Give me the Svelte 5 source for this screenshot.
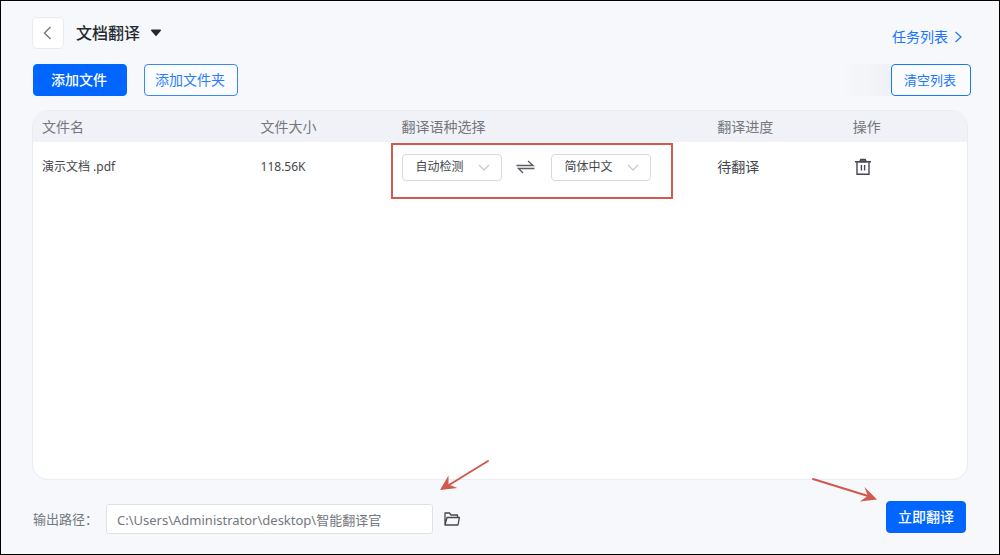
<script>
  let source = $state('auto');
  let target = $state('zh');
  let path = $state('C:\\Users\\Administrator\\desktop\\智能翻译官');
</script>

<main class="app">
  <header class="top">
    <button class="back" aria-label="返回">
      <svg width="16" height="16" viewBox="0 0 16 16"><path d="M10.500 2 4.500 8l6 6" fill="none" stroke="#73777e" stroke-width="1.4" /></svg>
    </button>
    <button class="title">
      文档翻译
      <svg width="12" height="8" viewBox="0 0 12 8"><path d="M1.700 1.200h8.600l-4.300 5z" fill="#24282f" stroke="#24282f" stroke-width="1.4" stroke-linejoin="round" /></svg>
    </button>
    <a class="tasks" href="#tasks">
      任务列表
      <svg width="8" height="12" viewBox="0 0 8 12"><path d="M.5 1l5.500 5-5.500 5" fill="none" stroke="#1a75ff" stroke-width="1.2" /></svg>
    </a>
  </header>

  <div class="toolbar">
    <button class="btn primary">添加文件</button>
    <button class="btn outline">添加文件夹</button>
    <span class="fade"></span>
    <button class="btn outline clear">清空列表</button>
  </div>

  <section class="card">
    <table>
      <colgroup>
        <col class="c-name" /><col class="c-size" /><col class="c-lang" /><col class="c-state" /><col class="c-op" />
      </colgroup>
      <thead>
        <tr><th>文件名</th><th>文件大小</th><th>翻译语种选择</th><th>翻译进度</th><th>操作</th></tr>
      </thead>
      <tbody>
        <tr>
          <td class="small">演示文档 .pdf</td>
          <td class="small">118.56K</td>
          <td class="lang">
            <div class="pair">
              <span class="pick">
                <select bind:value={source} aria-label="源语言"><option value="auto">自动检测</option></select>
                <svg width="12" height="8" viewBox="0 0 12 8"><path d="M1 1l5 5 5-5" fill="none" stroke="#c3c6d0" stroke-width="1.1" /></svg>
              </span>
              <svg class="swap" width="21" height="16" viewBox="0 0 21 16"><path d="M.5 6.500H17L12 2M18.500 9.500H2.500L7 14" fill="none" stroke="#5a5d63" stroke-width="1.4" /></svg>
              <span class="pick">
                <select bind:value={target} aria-label="目标语言"><option value="zh">简体中文</option></select>
                <svg width="12" height="8" viewBox="0 0 12 8"><path d="M1 1l5 5 5-5" fill="none" stroke="#c3c6d0" stroke-width="1.1" /></svg>
              </span>
            </div>
            <span class="mark"></span>
          </td>
          <td>待翻译</td>
          <td>
            <button class="icon" aria-label="删除">
              <svg width="18" height="18" viewBox="0 0 18 18" fill="none" stroke="#44474f" stroke-width="1.4"><path d="M1 3.700h16M3 4v12.300h12V4M7.400 7v5.500M10.600 7v5.500" /><path d="M5.800 3.700l1-2.200h4.400l1 2.200z" fill="#6b6e75" /></svg>
            </button>
          </td>
        </tr>
      </tbody>
    </table>
  </section>

  <footer class="bottom">
    <label for="out">输出路径：</label>
    <input id="out" type="text" bind:value={path} />
    <button class="icon folder" aria-label="打开文件夹">
      <svg width="16" height="14" viewBox="0 0 16 14" fill="none" stroke="#44474d" stroke-width="1.3" stroke-linejoin="round"><path d="M1 13V1h4.500l1.500 2h6.500v2.500M1 13l2-7.500h12.400L14 13z" /></svg>
    </button>
    <button class="btn primary go">立即翻译</button>
    <svg class="arrow to-path" width="52" height="34" viewBox="0 0 52 34"><path d="M48 2 9 26" stroke="#cf5a4d" stroke-width="2" stroke-linecap="round" /><path d="M0 31 8.500 16.500l0 9 9 3.500z" fill="#cf5a4d" /></svg>
    <svg class="arrow to-go" width="68" height="26" viewBox="0 0 68 26"><path d="M3 3 58 20" stroke="#cf5a4d" stroke-width="2" stroke-linecap="round" /><path d="M67 23.500 54.500 11l3.300 9-8 5.500z" fill="#cf5a4d" /></svg>
  </footer>
</main>

<style>
  :global(body) { margin: 0; }
  .app, .app * { box-sizing: border-box; }
  .app {
    display: flex;
    flex-direction: column;
    min-height: 100vh;
    padding: 16px 31px 20px;
    border: 1px solid #000;
    background: #f6f8fb;
    color: #44474d;
    font: 14px/20px "Noto Sans", "Noto Sans CJK SC", sans-serif;
  }
  button, input, select { margin: 0; font: inherit; color: inherit; }
  button { cursor: pointer; }
  svg { display: block; flex: none; }
  .top { display: flex; align-items: center; gap: 12px; height: 32px; }
  .back {
    display: grid;
    place-items: center;
    width: 32px;
    height: 32px;
    padding: 0;
    border: 1px solid #e8ebf2;
    border-radius: 5px;
    background: #fff;
  }
  .title {
    display: flex;
    align-items: center;
    gap: 10px;
    padding: 0;
    border: 0;
    background: none;
    color: #24282f;
    font-size: 16px;
    font-weight: 500;
  }
  .tasks {
    display: flex;
    align-items: center;
    gap: 7px;
    margin: 8px 5px 0 auto;
    color: #1a75ff;
    text-decoration: none;
  }
  .toolbar { display: flex; margin: 15px -3px 14px 1px; }
  .btn {
    height: 32px;
    padding: 0 12px 0 10px;
    border: 1px solid #0066ff;
    border-radius: 4px;
    white-space: nowrap;
  }
  .primary { width: 94px; background: #0066ff; color: #fff; font-weight: 500; }
  .outline { width: 94px; margin-left: 17px; border-color: #3a86ff; background: #fafcff; color: #2b7cff; }
  .fade {
    width: 51px;
    margin-left: auto;
    background: linear-gradient(90deg, #f6f8fb, #eff1f5);
  }
  .clear { width: 80px; margin-left: 0; font-size: 13px; border-color: #1a75ff; color: #1a75ff; }
  .card {
    flex: 1;
    overflow: hidden;
    border: 1px solid #e8edf4;
    border-radius: 16px;
    background: #fff;
  }
  table { width: 100%; table-layout: fixed; border-collapse: collapse; }
  .c-name { width: 23.4%; }
  .c-size { width: 15.1%; }
  .c-lang { width: 33.8%; }
  .c-state { width: 14.5%; }
  th, td { padding: 0 0 0 9px; text-align: left; font-weight: 400; white-space: nowrap; }
  th { height: 31px; background: #f1f2f7; color: #73777e; }
  td { height: 50px; }
  .small { font-size: 12px; }
  .lang { position: relative; }
  .pair { display: flex; align-items: center; gap: 14px; }
  .pick { position: relative; width: 100px; }
  .pick select {
    appearance: none;
    display: block;
    width: 100%;
    height: 27px;
    padding: 0 24px 0 13px;
    border: 1px solid #d5d9e3;
    border-radius: 4px;
    background: #fff;
    font-size: 12px;
  }
  .pick svg { position: absolute; right: 12px; top: 10px; pointer-events: none; }
  .mark {
    position: absolute;
    top: 1px;
    left: -2px;
    width: 282px;
    height: 56px;
    border: 2px solid #cf5a4d;
    pointer-events: none;
  }
  .icon { display: block; padding: 0; border: 0; background: none; }
  td .icon { margin-left: 1px; }
  .bottom { position: relative; display: flex; align-items: center; padding: 20px 2px 0 1px; font-size: 13px; color: #73777e; }
  .bottom label { width: 73px; flex: none; margin-top: 4px; }
  .bottom input {
    width: 35%;
    height: 30px;
    margin-top: 4px;
    padding: 0 10px;
    border: 1px solid #dfe1e5;
    border-radius: 3px;
    background: #fff;
  }
  .folder { margin: 4px 0 0 11px; }
  .go { width: 80px; margin-left: auto; padding: 0; font-size: 14px; }
  .arrow { position: absolute; pointer-events: none; }
  .to-path { left: 408px; top: -21px; }
  .to-go { right: 90px; top: -4px; }
</style>
